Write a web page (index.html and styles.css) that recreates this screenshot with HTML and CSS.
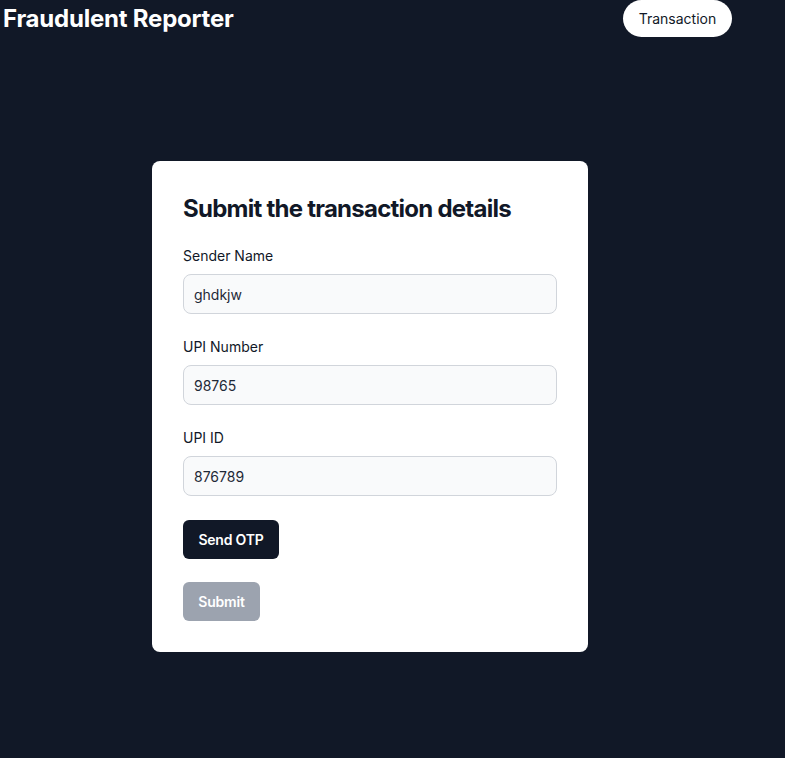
FILE: index.html
```html
<!DOCTYPE html>
<html lang="en">
<head>
<meta charset="utf-8">
<title>Fraudulent Reporter</title>
<link rel="stylesheet" href="styles.css">
</head>
<body>
<header class="topbar">
  <h1 class="brand">Fraudulent Reporter</h1>
  <button class="nav-pill" type="button">Transaction</button>
</header>
<main class="main">
  <form class="card">
    <h2 class="card-title">Submit the transaction details</h2>
    <div class="field">
      <label class="label" for="sender">Sender Name</label>
      <input class="input" id="sender" type="text" value="ghdkjw">
    </div>
    <div class="field">
      <label class="label" for="upinum">UPI Number</label>
      <input class="input" id="upinum" type="text" value="98765">
    </div>
    <div class="field">
      <label class="label" for="upiid">UPI ID</label>
      <input class="input" id="upiid" type="text" value="876789">
    </div>
    <div class="actions">
      <button class="btn btn-dark" type="button">Send OTP</button>
      <button class="btn btn-disabled" type="button">Submit</button>
    </div>
  </form>
</main>
</body>
</html>
```
FILE: styles.css
```css
* { box-sizing: border-box; }
html, body {
  margin: 0;
  padding: 0;
  background: #111827;
  min-height: 100%;
}
body {
  font-family: Inter, "Noto Sans", sans-serif;
  color: #111827;
  min-height: 758px;
}
.topbar {
  display: flex;
  align-items: center;
  justify-content: space-between;
  height: 37px;
  padding: 0 53px 0 3px;
}
.brand {
  margin: 0;
  font-size: 24px;
  line-height: 32px;
  font-weight: 700;
  letter-spacing: -0.22px;
  color: #ffffff;
}
.nav-pill {
  height: 37px;
  width: 109px;
  border: none;
  border-radius: 999px;
  background: #ffffff;
  color: #111827;
  font-family: inherit;
  font-size: 14px;
  padding: 0;
}
.main {
  padding: 124px 0 0 152px;
}
.card {
  width: 436px;
  background: #ffffff;
  border-radius: 8px;
  padding: 32px 31px 31px 31px;
}
.card-title {
  margin: 0 0 21px 0;
  font-size: 24px;
  line-height: 32px;
  font-weight: 700;
  letter-spacing: -0.75px;
  color: #111827;
}
.field {
  margin-bottom: 23px;
}
.label {
  display: block;
  font-size: 14px;
  line-height: 20px;
  font-weight: 400;
  color: #111827;
  margin-bottom: 8px;
}
.input {
  display: block;
  width: 374px;
  height: 40px;
  background: #f9fafb;
  border: 1px solid #d1d5db;
  border-radius: 8px;
  padding: 0 10px;
  font-family: inherit;
  font-size: 14px;
  color: #1f2937;
}
.actions {
  display: flex;
  flex-direction: column;
  align-items: flex-start;
  gap: 23px;
  padding-top: 1px;
}
.btn {
  border: none;
  border-radius: 6px;
  height: 39px;
  font-family: inherit;
  font-size: 14px;
  font-weight: 600;
  letter-spacing: -0.2px;
  color: #ffffff;
  padding: 0;
  text-align: center;
  white-space: nowrap;
}
.btn-dark {
  background: #111827;
  width: 96px;
}
.btn-disabled {
  background: #9ca3af;
  width: 77px;
}
```
